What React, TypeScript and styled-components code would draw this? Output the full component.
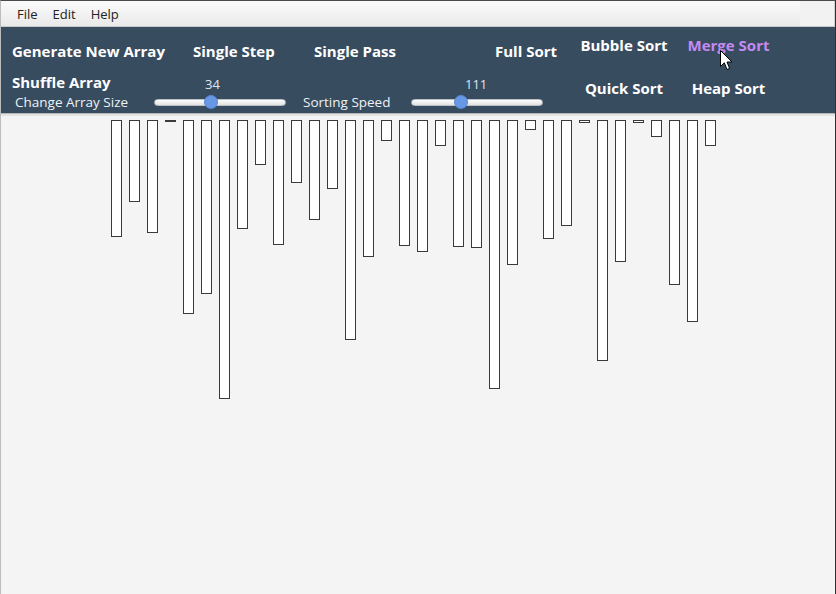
import React from "react";
import styled, { createGlobalStyle } from "styled-components";

const Global = createGlobalStyle`
  html, body { margin: 0; padding: 0; background: #f4f4f4; overflow: hidden; }
  * { box-sizing: border-box; }
`;

const FONT = `"Open Sans", "Noto Sans", "DejaVu Sans", sans-serif`;

const Frame = styled.div`
  position: relative;
  width: 836px;
  height: 594px;
  border-top: 1px solid #4a4a4a;
  border-left: 1px solid #bcbcbc;
  border-right: 1px solid #2f2f2f;
  background: #f4f4f4;
  display: flex;
  flex-direction: column;
  font-family: ${FONT};
  overflow: hidden;
`;

const MenuRow = styled.div`
  display: flex;
  height: 26px;
  border-bottom: 1px solid #c9c9c9;
`;

const MenuBar = styled.div`
  flex: 0 0 799px;
  display: flex;
  align-items: center;
  padding-left: 16px;
  gap: 15px;
  background: linear-gradient(#fbfbfb, #e9e9e9);
`;

const MenuFiller = styled.div`
  flex: 1;
  background: #f2f2f2;
  border-right: 1px solid #d2d2d2;
`;

const MenuItem = styled.span`
  font-size: 13px;
  color: #222;
`;

const Toolbar = styled.div`
  position: relative;
  height: 87px;
  background: #374c5f;
  border-bottom: 1px solid #b5b5b5;
  display: flex;
`;

const LeftSection = styled.div`
  flex: 0 0 575px;
  display: flex;
  flex-direction: column;
  padding: 14px 0 0 11px;
`;

const TopRow = styled.div`
  display: grid;
  grid-template-columns: 181px 121px 181px auto;
  height: 20px;
  align-items: center;
`;

const ActionButton = styled.span<{ $hover?: boolean }>`
  font-size: 15px;
  font-weight: 700;
  line-height: 20px;
  white-space: nowrap;
  color: ${(p) => (p.$hover ? "#c48af2" : "#ffffff")};
`;

const BottomGrid = styled.div`
  margin-top: 11px;
  display: grid;
  grid-template-columns: 142px 132px 125px 132px;
  grid-template-rows: 20px 16px;
  row-gap: 2px;
  align-items: center;
`;

const FieldLabel = styled.span<{ $indent: number }>`
  grid-row: 2;
  padding-left: ${(p) => p.$indent}px;
  font-size: 13.5px;
  line-height: 16px;
  color: #eef2f6;
  white-space: nowrap;
`;

const SliderBox = styled.div`
  grid-row: 1 / span 2;
  align-self: stretch;
  display: flex;
  flex-direction: column;
  justify-content: flex-end;
`;

const SliderValue = styled.span`
  display: block;
  font-size: 13px;
  line-height: 16px;
  color: #dfe7f0;
  margin-bottom: 2px;
`;

const TrackArea = styled.div`
  position: relative;
  height: 16px;
  display: flex;
  align-items: center;
`;

const Track = styled.div`
  width: 100%;
  height: 7px;
  border-radius: 4px;
  background: linear-gradient(#fdfdfd, #e2e2e2);
  border: 1px solid #b9c0c6;
`;

const Thumb = styled.div`
  position: absolute;
  top: 1px;
  width: 14px;
  height: 14px;
  border-radius: 50%;
  background: #6798e6;
  border: 1px solid #5b88d4;
`;

const RightSection = styled.div`
  display: grid;
  grid-template-columns: 96px 97px;
  grid-template-rows: 20px 20px;
  column-gap: 8px;
  row-gap: 23px;
  padding-top: 8px;
  justify-items: center;
`;

const Cursor = styled.svg`
  position: absolute;
  left: 719px;
  top: 23px;
`;

const Canvas = styled.div`
  flex: 1;
  display: flex;
  align-items: flex-start;
  gap: 7px;
  padding: 4px 0 0 110px;
  border-top: 2px solid #e3e3e3;
`;

const Bar = styled.div`
  flex: 0 0 11px;
  background: #ffffff;
  border: 1px solid #3a3a3a;
`;

const heights = [
  117, 82, 113, 2, 194, 174, 279, 109, 45, 125, 63, 100, 69, 220, 137, 21, 126,
  132, 26, 127, 128, 269, 145, 10, 119, 106, 3, 241, 142, 3, 17, 165, 202, 26,
];

function Slider({ value, fraction, labelOffset }: { value: number; fraction: number; labelOffset: number }) {
  const travel = 132 - 14;
  return (
    <SliderBox>
      <SliderValue style={{ paddingLeft: labelOffset }}>{value}</SliderValue>
      <TrackArea>
        <Track />
        <Thumb style={{ left: Math.round(fraction * travel) }} />
      </TrackArea>
    </SliderBox>
  );
}

export default function App() {
  return (
    <>
      <Global />
      <Frame>
        <MenuRow>
          <MenuBar>
            <MenuItem>File</MenuItem>
            <MenuItem>Edit</MenuItem>
            <MenuItem>Help</MenuItem>
          </MenuBar>
          <MenuFiller />
        </MenuRow>
        <Toolbar>
          <LeftSection>
            <TopRow>
              <ActionButton>Generate New Array</ActionButton>
              <ActionButton>Single Step</ActionButton>
              <ActionButton>Single Pass</ActionButton>
              <ActionButton>Full Sort</ActionButton>
            </TopRow>
            <BottomGrid>
              <ActionButton style={{ gridRow: 1 }}>Shuffle Array</ActionButton>
              <FieldLabel $indent={3} style={{ gridColumn: 1 }}>Change Array Size</FieldLabel>
              <Slider value={34} fraction={0.424} labelOffset={51} />
              <FieldLabel $indent={17} style={{ gridColumn: 3 }}>Sorting Speed</FieldLabel>
              <Slider value={111} fraction={0.364} labelOffset={54} />
            </BottomGrid>
          </LeftSection>
          <RightSection>
            <ActionButton>Bubble Sort</ActionButton>
            <ActionButton $hover>Merge Sort</ActionButton>
            <ActionButton>Quick Sort</ActionButton>
            <ActionButton>Heap Sort</ActionButton>
          </RightSection>
          <Cursor width="13" height="21" viewBox="0 0 13 21">
            <path d="M0.5 0.5 L0.5 16.5 L4.3 12.8 L7 19.5 L9.6 18.4 L7 12 L12 12 Z" fill="#fff" stroke="#000" strokeWidth="1" strokeLinejoin="round" />
          </Cursor>
        </Toolbar>
        <Canvas>
          {heights.map((h, i) => (
            <Bar key={i} style={{ height: h }} />
          ))}
        </Canvas>
      </Frame>
    </>
  );
}
